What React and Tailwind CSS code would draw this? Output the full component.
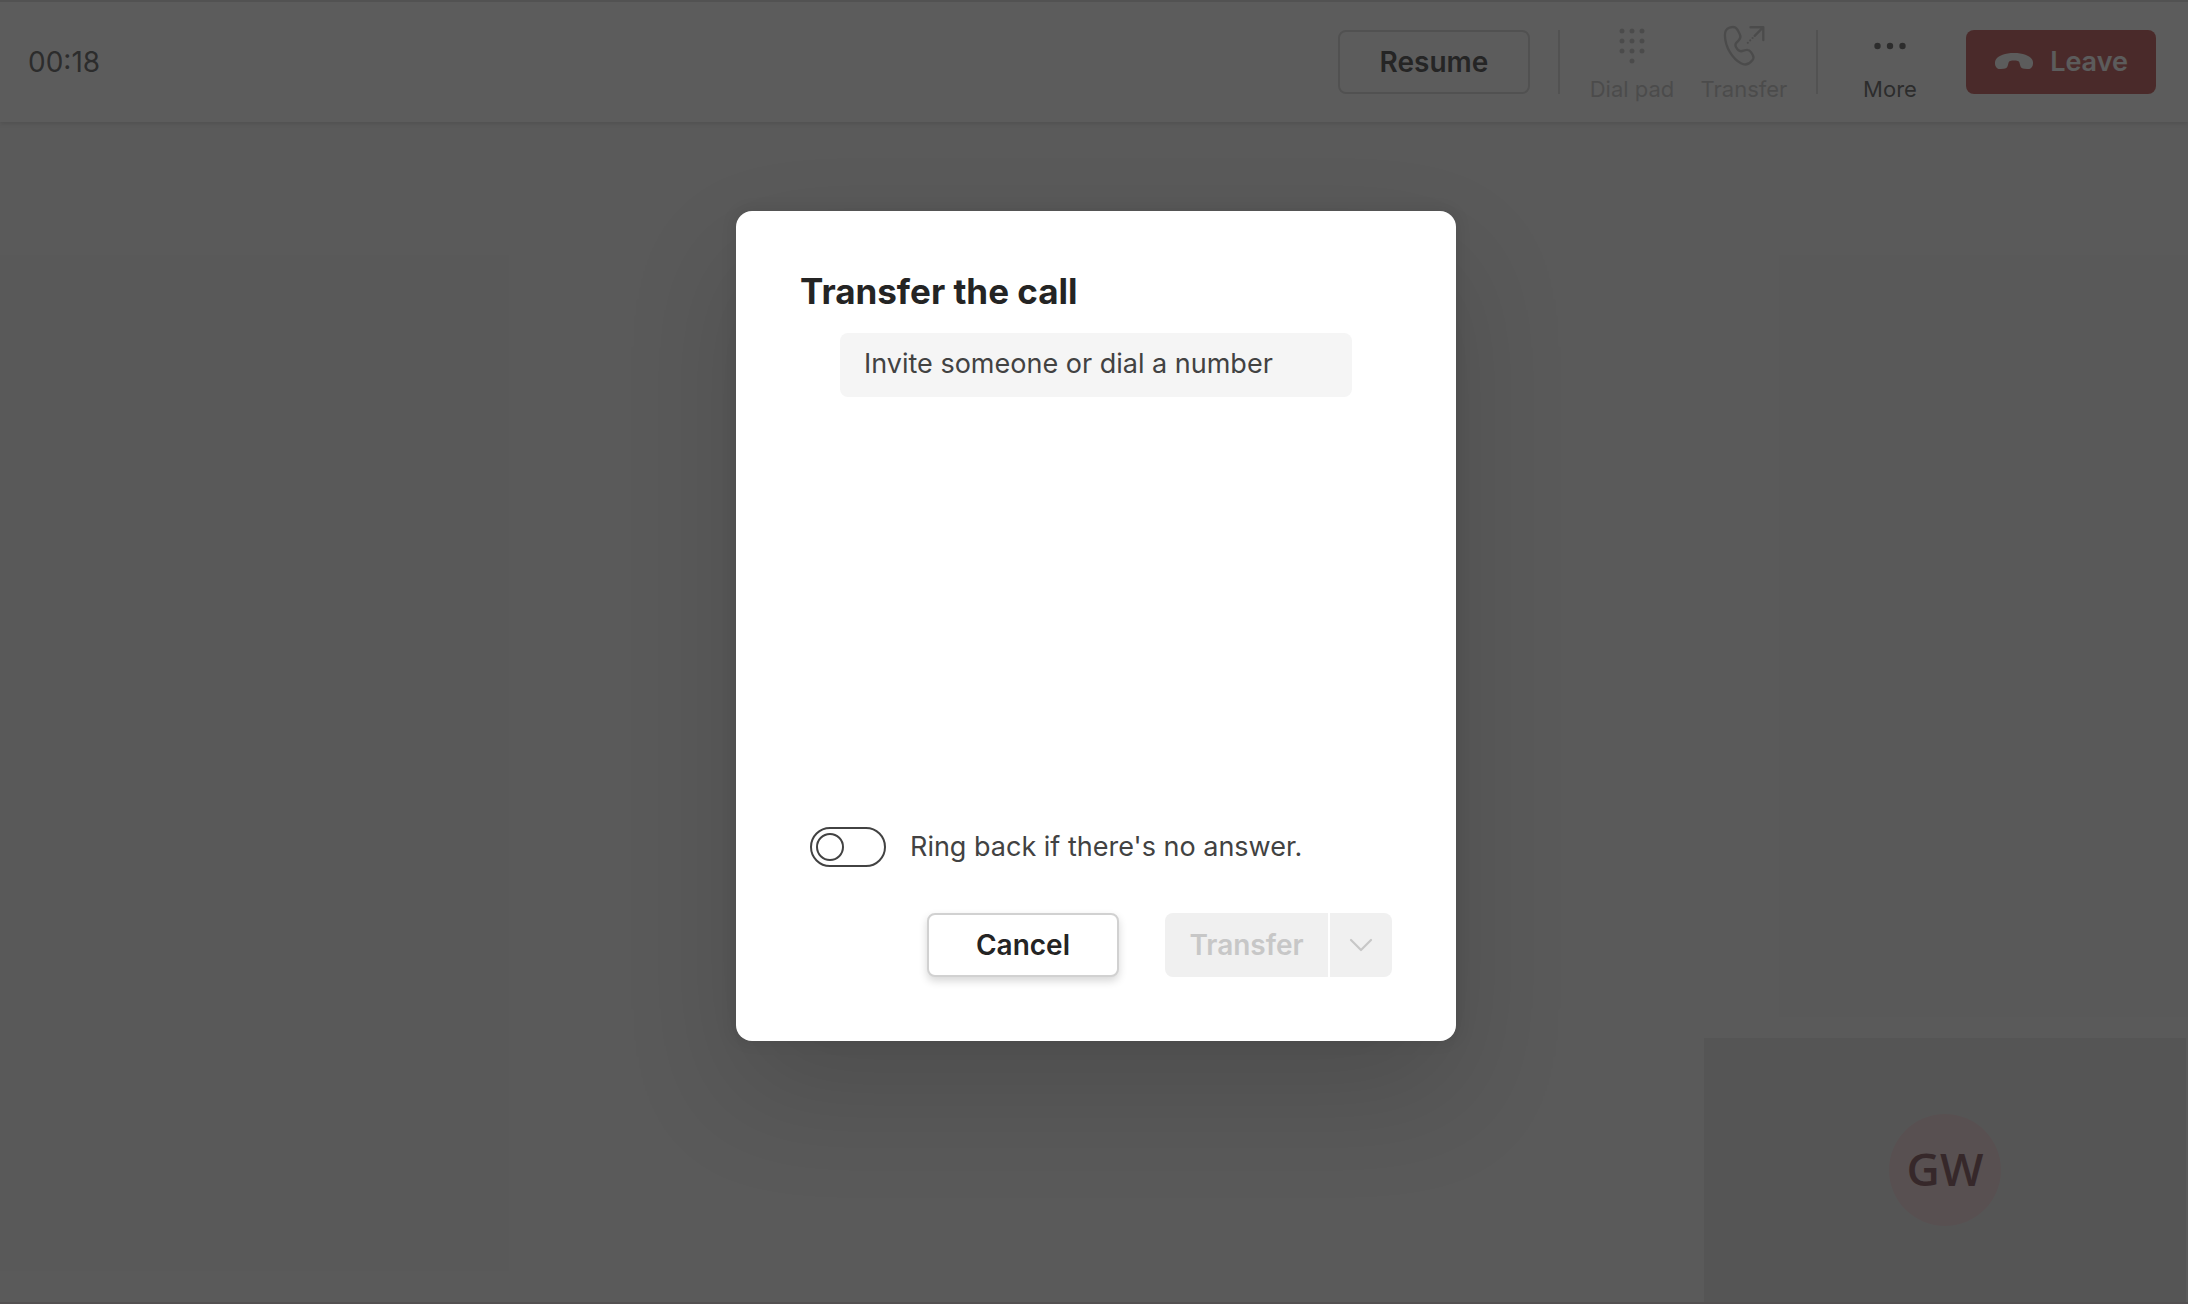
import { useState } from "react";

function TransferIcon() {
  return (
    <svg className="h-12 w-12" viewBox="0 0 48 48" aria-hidden="true">
      <g fill="none" stroke="currentColor" strokeWidth="2.4" strokeLinecap="round" strokeLinejoin="round">
        <path d="M9.500 6.600c3.300-1.200 6.600-.7 8.200 2.500l2 3.900c1.100 2.200.8 4.400-.8 6.100l-2.600 2.700c-1.200 1.300-1 3-.2 4.500 1.500 2.800 3.600 4.500 6 3.700l3.400-.9c2.300-.6 4.200.1 5.500 2.100l1.700 2.600c1.200 1.900.9 3.900-.5 5.600-3 3.600-6.600 5.600-11.300 2.900C12.600 37.700 5.200 26.500 4.900 14.400c-.1-3.700 1.200-6.600 4.600-7.800Z" />
        <path d="M30.500 6.200h12.800V19M43.300 6.200l-8.600 8.600" />
      </g>
      <g fill="currentColor">
        <circle cx="32.600" cy="17" r="1.100" />
        <circle cx="30.200" cy="19.400" r="1.100" />
        <circle cx="27.800" cy="21.800" r="1.100" />
      </g>
    </svg>
  );
}

function DialPadIcon() {
  const dots = [[14, 10], [24, 10], [34, 10], [14, 20], [24, 20], [34, 20], [14, 30], [24, 30], [34, 30], [24, 40]];
  return (
    <svg className="h-12 w-12" viewBox="0 0 48 48" fill="currentColor" aria-hidden="true">
      {dots.map(([cx, cy]) => (
        <circle key={`${cx}-${cy}`} cx={cx} cy={cy} r="2.5" />
      ))}
    </svg>
  );
}

function MoreIcon() {
  return (
    <svg className="h-12 w-12" viewBox="0 0 48 48" fill="currentColor" aria-hidden="true">
      <circle cx="11.5" cy="25" r="3.2" />
      <circle cx="24" cy="25" r="3.2" />
      <circle cx="36.5" cy="25" r="3.2" />
    </svg>
  );
}

function HangUpIcon() {
  return (
    <svg className="h-10 w-10" viewBox="0 0 40 40" fill="currentColor" aria-hidden="true">
      <path d="M20 11c8.700 0 15.600 2.400 18.100 6.600 1 1.700 1.200 3.900.6 5.800-.8 2.500-2.700 3.700-5.400 3.600l-2.800-.2c-2.300-.2-3.700-1.300-4.300-3.400l-.8-3c-.2-.8-.7-1.300-1.500-1.500-2.600-.5-5.200-.5-7.800 0-.8.2-1.300.7-1.500 1.500l-.8 3c-.6 2.100-2 3.200-4.300 3.400l-2.800.2c-2.700.1-4.600-1.100-5.400-3.600-.6-1.900-.4-4.100.6-5.800C4.400 13.400 11.300 11 20 11Z" />
    </svg>
  );
}

function ToolbarButton({ icon, label, disabled }) {
  return (
    <button
      type="button"
      disabled={disabled}
      className="flex w-28 flex-col items-center text-[#424242] disabled:text-[#bdbdbd]"
    >
      {icon}
      <span className="mt-1.5 text-[22px] leading-7">{label}</span>
    </button>
  );
}

function CallHeader() {
  return (
    <header className="flex h-[122px] items-center border-t-2 border-[#d8d8d8] bg-white pr-8 pl-7 shadow-[0_2px_4px_rgba(0,0,0,0.14)]">
      <span className="text-[28px] leading-10 text-[#424242]">00:18</span>
      <div className="ml-auto flex items-center">
        <button
          type="button"
          className="h-16 w-48 rounded-lg border-2 border-[#d1d1d1] text-[28px] leading-10 font-semibold text-[#242424]"
        >
          Resume
        </button>
        <span className="mr-4 ml-7 h-16 w-0.5 bg-[#d8d8d8]" />
        <ToolbarButton icon={<DialPadIcon />} label="Dial pad" disabled />
        <ToolbarButton icon={<TransferIcon />} label="Transfer" disabled />
        <span className="mx-4 h-16 w-0.5 bg-[#d8d8d8]" />
        <ToolbarButton icon={<MoreIcon />} label="More" />
        <button
          type="button"
          className="ml-5 flex h-16 w-[190px] items-center justify-end gap-4 rounded-lg bg-[#b93a38] pr-7 text-[27px] leading-10 font-semibold text-white"
        >
          <HangUpIcon />
          Leave
        </button>
      </div>
    </header>
  );
}

function TransferDialog() {
  const [ringBack, setRingBack] = useState(false);

  return (
    <section
      role="dialog"
      aria-modal="true"
      aria-labelledby="transfer-title"
      className="flex w-[720px] flex-col rounded-2xl bg-white p-16 shadow-[0_52px_116px_rgba(0,0,0,0.14),0_0_16px_rgba(0,0,0,0.1)]"
    >
      <h2 id="transfer-title" className="-mt-2 text-[35px] leading-12 font-bold text-[#242424]">
        Transfer the call
      </h2>

      <input
        type="text"
        aria-label="Invite someone or dial a number"
        placeholder="Invite someone or dial a number"
        className="mx-10 mt-[18px] h-16 rounded-lg bg-[#f5f5f5] px-6 pb-1 text-[27px] leading-10 text-[#424242] outline-none placeholder:text-[#424242]"
      />

      <div className="h-[430px]" />

      <label className="flex items-center gap-6 pl-2.5 text-[27px] leading-10 text-[#424242]">
        <input
          type="checkbox"
          role="switch"
          checked={ringBack}
          onChange={(e) => setRingBack(e.target.checked)}
          className="peer sr-only"
        />
        <span className="flex h-10 w-[76px] items-center rounded-full border-2 border-[#424242] px-1 peer-checked:justify-end">
          <span className="h-7 w-7 rounded-full border-2 border-[#424242]" />
        </span>
        Ring back if there's no answer.
      </label>

      <div className="mt-[46px] flex justify-end">
        <button
          type="button"
          className="mr-[46px] h-16 w-48 rounded-lg border-2 border-[#d1d1d1] bg-white text-[28px] leading-10 font-semibold text-[#242424] shadow-[0_4px_8px_rgba(0,0,0,0.16)]"
        >
          Cancel
        </button>
        <div className="flex gap-0.5">
          <button
            type="button"
            disabled
            className="h-16 w-[163px] rounded-l-lg bg-[#f0f0f0] text-[28px] leading-10 font-semibold text-[#c7c7c7]"
          >
            Transfer
          </button>
          <button
            type="button"
            disabled
            aria-label="More transfer options"
            className="flex h-16 w-[62px] items-center justify-center rounded-r-lg bg-[#f0f0f0] text-[#c7c7c7]"
          >
            <svg className="h-6 w-6" viewBox="0 0 24 24" fill="none" stroke="currentColor" strokeWidth="2.2" strokeLinecap="round" strokeLinejoin="round" aria-hidden="true">
              <path d="m2 7 10 10L22 7" />
            </svg>
          </button>
        </div>
      </div>
    </section>
  );
}

export default function App() {
  return (
    <div className="relative flex h-screen flex-col bg-[#f5f5f5] font-[Inter,sans-serif]">
      <CallHeader />

      <main className="flex flex-1 items-end justify-end border-b-2 border-[#dccfd4] pr-0.5">
        <div className="flex h-[264px] w-[482px] items-center justify-center bg-[#e4e4e4]">
          <div className="flex h-28 w-28 items-center justify-center rounded-full bg-[#edd0d3] pb-1 font-['Open_Sans',sans-serif] text-[46px] font-semibold text-[#69323a]">
            GW
          </div>
        </div>
      </main>

      {/* Dimmed backdrop over the call stage */}
      <div className="absolute inset-0 flex items-start justify-center bg-[#252525]/75 pt-[211px] pl-1">
        <TransferDialog />
      </div>
    </div>
  );
}
